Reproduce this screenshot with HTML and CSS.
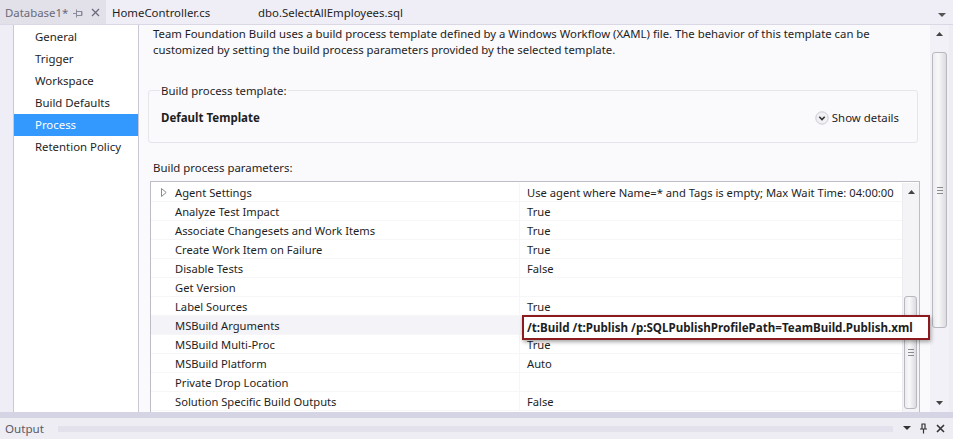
FILE: index.html
```html
<!DOCTYPE html>
<html>
<head>
<meta charset="utf-8">
<link rel="stylesheet" href="styles.css">
</head>
<body>
<div class="app">
  <div class="tabs">
    <div class="tab active">
      <span class="tab-title">Database1*</span>
      <svg class="pin" width="10" height="10" viewBox="0 0 10 10"><path d="M0 5.5h3.5M3.5 1.5v8M3.5 3.5h5.5v4h-5.5M8.5 3.5v4" stroke="#8a8a9a" stroke-width="1" fill="none"/></svg>
      <svg class="close" width="9" height="9" viewBox="0 0 9 9"><path d="M1 1l7 7M8 1l-7 7" stroke="#6b6b7b" stroke-width="1.3"/></svg>
    </div>
    <div class="tab second">HomeController.cs</div>
    <div class="tab">dbo.SelectAllEmployees.sql</div>
    <div class="tab-spacer"></div>
    <svg class="tab-drop" width="8" height="5" viewBox="0 0 8 5"><path d="M0 0h8L4 4z" fill="#555"/></svg>
  </div>
  <div class="main">
    <div class="left-strip"></div>
    <nav class="nav">
      <div class="nav-item">General</div>
      <div class="nav-item">Trigger</div>
      <div class="nav-item">Workspace</div>
      <div class="nav-item">Build Defaults</div>
      <div class="nav-item selected">Process</div>
      <div class="nav-item">Retention Policy</div>
    </nav>
    <section class="content">
      <p class="desc">Team Foundation Build uses a build process template defined by a Windows Workflow (XAML) file. The behavior of this template can be<br>customized by setting the build process parameters provided by the selected template.</p>
      <fieldset class="template-box">
        <legend>Build process template:</legend>
        <div class="template-row">
          <span class="template-name">Default Template</span>
          <span class="show-details">
            <svg width="14" height="14" viewBox="0 0 14 14"><circle cx="7" cy="7" r="6.2" fill="#f1f1f4" stroke="#cacad3"/><path d="M4.3 5.8L7 8.5l2.7-2.7" stroke="#333" stroke-width="1.6" fill="none"/></svg>
            Show details
          </span>
        </div>
      </fieldset>
      <div class="params-label">Build process parameters:</div>
      <div class="grid">
        <div class="rows">
          <div class="row"><span class="name"><svg class="expander" width="6" height="9" viewBox="0 0 6 9"><path d="M0.5 0.5L5.2 4.5 0.5 8.5z" fill="#fff" stroke="#8a8a8a"/></svg>Agent Settings</span><span class="val">Use agent where Name=* and Tags is empty; Max Wait Time: 04:00:00</span></div>
          <div class="row"><span class="name">Analyze Test Impact</span><span class="val">True</span></div>
          <div class="row"><span class="name">Associate Changesets and Work Items</span><span class="val">True</span></div>
          <div class="row"><span class="name">Create Work Item on Failure</span><span class="val">True</span></div>
          <div class="row"><span class="name">Disable Tests</span><span class="val">False</span></div>
          <div class="row"><span class="name">Get Version</span><span class="val"></span></div>
          <div class="row"><span class="name">Label Sources</span><span class="val">True</span></div>
          <div class="row hl"><span class="name">MSBuild Arguments</span><span class="val"></span></div>
          <div class="row"><span class="name">MSBuild Multi-Proc</span><span class="val">True</span></div>
          <div class="row"><span class="name">MSBuild Platform</span><span class="val">Auto</span></div>
          <div class="row"><span class="name">Private Drop Location</span><span class="val"></span></div>
          <div class="row"><span class="name">Solution Specific Build Outputs</span><span class="val">False</span></div>
        </div>
        <div class="vscroll inner">
          <svg class="arrow" width="7" height="4" viewBox="0 0 7 4"><path d="M0 4h7L3.5 0z" fill="#444"/></svg>
          <div class="track"><div class="thumb inner-thumb"><span class="grip"></span></div></div>
        </div>
        <div class="editor">/t:Build /t:Publish /p:SQLPublishProfilePath=TeamBuild.Publish.xml</div>
      </div>
    </section>
    <div class="vscroll outer">
      <svg class="arrow" width="7" height="4" viewBox="0 0 7 4"><path d="M0 4h7L3.5 0z" fill="#444"/></svg>
      <div class="track"><div class="thumb outer-thumb"><span class="grip"></span></div></div>
      <svg class="arrow" width="7" height="4" viewBox="0 0 7 4"><path d="M0 0h7L3.5 4z" fill="#444"/></svg>
    </div>
  </div>
  <div class="splitter"></div>
  <div class="output">
    <span class="output-title">Output</span>
    <span class="dots"></span>
    <svg width="8" height="5" viewBox="0 0 8 5"><path d="M0 0h8L4 4z" fill="#333"/></svg>
    <svg width="9" height="11" viewBox="0 0 9 11"><path d="M2.5 1h4M3 1v5M6 1v5M1 6h7M4.5 6v4.5" stroke="#333" stroke-width="1.2" fill="none"/></svg>
    <svg width="9" height="9" viewBox="0 0 9 9"><path d="M1 1l7 7M8 1l-7 7" stroke="#333" stroke-width="1.6"/></svg>
  </div>
</div>
</body>
</html>
```

FILE: styles.css
```css
* { box-sizing: border-box; }
html, body { margin: 0; padding: 0; }
body {
  width: 953px;
  height: 439px;
  overflow: hidden;
  background: #eeedf4;
  font-family: "Noto Sans", "Open Sans", sans-serif;
  font-size: 11.4px;
  color: #1e1e1e;
}
.app { display: flex; flex-direction: column; height: 439px; }

.tabs {
  height: 25px;
  flex: none;
  display: flex;
  align-items: center;
  background: #efeef6;
  border-bottom: 1px solid #d9d8e4;
  font-size: 11.4px;
}
.tab { height: 24px; display: flex; align-items: center; padding: 0 6px; color: #1e1e1e; }
.tab.active {
  width: 106px;
  background: #e2e1ea;
  color: #6a6a78;
  padding-left: 5px;
}
.tab-title { width: 68px; }
.tab.active .pin { margin-right: 8px; margin-top: 1px; }
.tab.second { width: 146px; }
.tab-spacer { flex: 1; }
.tab-drop { margin: 6px 7px 0 0; }

.main { flex: 1; display: flex; min-height: 0; }
.left-strip { width: 14px; background: #efeef6; border-right: 1px solid #c9c8d4; }
.nav {
  width: 125px;
  background: #fff;
  border-right: 1px solid #c9c8d4;
  padding-top: 1px;
}
.nav-item { height: 22px; line-height: 22px; padding-left: 21px; }
.nav-item.selected { background: #3399ff; color: #fff; }

.content {
  width: 791px;
  background: #faf9fc;
  padding: 0 0 0 11px;
  display: flex;
  flex-direction: column;
}
.desc { margin: 1px 0 0 3px; line-height: 16px; font-size: 11.35px; white-space: nowrap; }
.template-box {
  margin: 25px 12px 0 -2px;
  padding: 0 18px 0 12px;
  border: 1px solid #e6e5ec;
  border-radius: 3px;
  height: 60px;
}
.template-box legend { padding: 0 1px; margin-left: -1px; }
.template-row {
  display: flex;
  justify-content: space-between;
  align-items: center;
  margin-top: 12px;
}
.template-name { font-weight: bold; font-size: 11.5px; }
.show-details { display: flex; align-items: center; gap: 3px; }
.params-label { margin: 17px 0 0 3px; line-height: 16px; }
.grid {
  margin: 5px 0 0 0;
  width: 770px;
  flex: 1;
  border: 1px solid #bdbdc8;
  border-bottom: none;
  background: #fff;
  display: flex;
  padding-top: 1px;
  position: relative;
  font-size: 11.2px;
}
.rows { flex: 1; }
.row {
  height: 19px;
  display: flex;
  align-items: center;
  border-bottom: 1px solid #f6f6f8;
}
.row.hl { background: #f3f3f8; }
.name {
  width: 369px;
  padding-left: 24px;
  position: relative;
  border-right: 1px solid #f6f6f8;
  height: 100%;
  display: flex;
  align-items: center;
}
.expander { position: absolute; left: 10px; top: 5px; }
.val { padding-left: 7px; }

.vscroll {
  display: flex;
  flex-direction: column;
  align-items: center;
}
.vscroll .arrow { margin: 7px 0; flex: none; }
.track { flex: 1; width: 100%; position: relative; }
.vscroll.inner {
  width: 17px;
  background: #f4f4f6;
  border-left: 1px solid #ececf0;
}
.vscroll.outer {
  width: 19px;
  background: #f2f1f7;
}
.thumb {
  position: absolute;
  left: 1px;
  right: 2px;
  border: 1px solid #b8b8c0;
  border-radius: 3px;
  background: linear-gradient(to right, #ececef, #f8f8fa 40%, #dcdce0);
  display: flex;
  align-items: center;
  justify-content: center;
}
.inner-thumb { top: 95px; bottom: 3px; }
.outer-thumb { top: 9px; bottom: 66px; left: 2px; right: 2px; }
.grip {
  width: 6px;
  height: 7px;
  background: repeating-linear-gradient(to bottom, #8a8a92 0 1px, transparent 1px 3px);
}

.editor {
  position: absolute;
  left: 371px;
  top: 133px;
  width: 408px;
  height: 25px;
  border: 2px solid #8c1b1f;
  background: #fff;
  font-weight: bold;
  font-size: 11.6px;
  line-height: 21px;
  padding-left: 3px;
  box-shadow: 1px 2px 4px rgba(0,0,0,0.35);
  white-space: nowrap;
  z-index: 2;
}

.splitter { height: 6px; background: #d4d4e4; flex: none; }
.output {
  height: 21px;
  flex: none;
  display: flex;
  align-items: center;
  background: #eeedf4;
  padding: 0 8px 0 5px;
  gap: 8px;
  font-size: 11.6px;
}
.output-title { color: #5a5a66; }
.dots {
  flex: 1;
  height: 6px;
  margin: 0 2px 0 6px;
  background-image: radial-gradient(circle, rgba(170,170,195,0.55) 0.5px, transparent 0.8px);
  background-size: 2px 2px;
}
```
